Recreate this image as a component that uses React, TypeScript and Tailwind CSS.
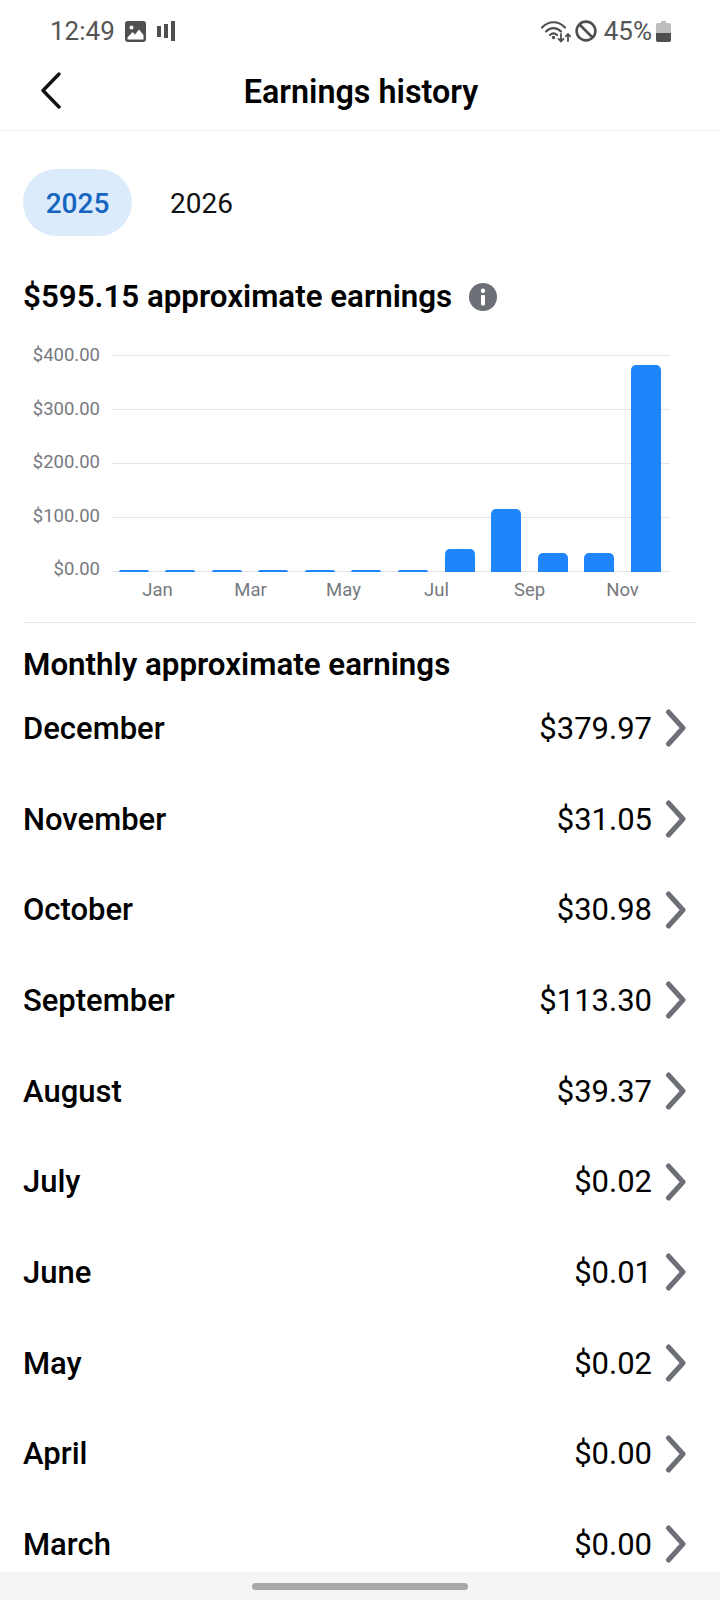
const yLabels = ['$400.00', '$300.00', '$200.00', '$100.00', '$0.00']

// bar heights in px above the $0.00 line
const bars = [2, 2, 2, 2, 2, 2, 2, 23, 63, 19, 19, 207]

const xLabels = ['Jan', 'Mar', 'May', 'Jul', 'Sep', 'Nov']

const months = [
  { name: 'December', amount: '$379.97' },
  { name: 'November', amount: '$31.05' },
  { name: 'October', amount: '$30.98' },
  { name: 'September', amount: '$113.30' },
  { name: 'August', amount: '$39.37' },
  { name: 'July', amount: '$0.02' },
  { name: 'June', amount: '$0.01' },
  { name: 'May', amount: '$0.02' },
  { name: 'April', amount: '$0.00' },
  { name: 'March', amount: '$0.00' },
]

function StatusBar() {
  return (
    <div className="h-[60px] flex items-center justify-between pl-[50px] pr-[49px] pt-[2px] text-[#555555] text-[26px] leading-none">
      <div className="flex items-center">
        <span>12:49</span>
        {/* picture notification */}
        <svg width="21" height="21" viewBox="0 0 21 21" className="ml-[10px]">
          <rect width="21" height="21" rx="3" fill="#4f4f4f" />
          <circle cx="6.5" cy="6.5" r="2" fill="#fff" />
          <path d="M2.5 16.5 L7.5 11 L10 13.5 L14 8.5 L18.5 14 V18.5 H2.5 Z" fill="#fff" />
        </svg>
        {/* signal bars */}
        <svg width="18" height="20" viewBox="0 0 18 20" className="ml-[11px]">
          <rect x="0" y="5" width="4" height="11" fill="#4f4f4f" />
          <rect x="7" y="3" width="4" height="14" fill="#4f4f4f" />
          <rect x="14" y="0" width="4" height="20" fill="#4f4f4f" />
        </svg>
      </div>
      <div className="flex items-center">
        {/* wifi with up/down arrows */}
        <svg width="30" height="23" viewBox="0 0 30 23" fill="none" stroke="#4f4f4f" strokeWidth="2.2" strokeLinecap="round">
          <path d="M1 7.5 C7.5 0.5 17.5 0.5 24 7.5" />
          <path d="M5 11.5 C9.5 7 15.5 7 20 11.5" />
          <path d="M9 15 C11.5 12.8 13.5 12.8 16 15" />
          <circle cx="12.5" cy="17.5" r="0.6" fill="#4f4f4f" />
          <path d="M20 14 V21 M17.5 18.8 L20 21.4 L22.5 18.8" strokeWidth="1.8" />
          <path d="M27 21 V14 M24.8 16.4 L27 14 L29.2 16.4" strokeWidth="1.8" />
        </svg>
        {/* do not disturb */}
        <svg width="22" height="22" viewBox="0 0 22 22" fill="none" stroke="#4f4f4f" strokeWidth="2.6" className="ml-[4px]">
          <circle cx="11" cy="11" r="9.4" />
          <path d="M4.5 4.5 L17.5 17.5" />
        </svg>
        <span className="ml-[7px]">45%</span>
        {/* battery */}
        <svg width="15" height="21" viewBox="0 0 15 21" className="ml-[4px]">
          <path d="M5 0 H10 V2 H13 Q15 2 15 4 V19 Q15 21 13 21 H2 Q0 21 0 19 V4 Q0 2 2 2 H5 Z" fill="#bdbdbd" />
          <path d="M0 12 H15 V19 Q15 21 13 21 H2 Q0 21 0 19 Z" fill="#4f4f4f" />
        </svg>
      </div>
    </div>
  )
}

function Header() {
  return (
    <div className="relative h-[71px] flex items-center justify-center border-b border-[#efefef]">
      <svg width="22" height="38" viewBox="0 0 22 38" fill="none" stroke="#111111" strokeWidth="3.4" strokeLinecap="round" strokeLinejoin="round" className="absolute left-[40px] top-[12px]">
        <path d="M19 2 L3 18.5 L19 35" />
      </svg>
      <h1 className="text-[32.3px] font-semibold text-black pl-[2px] pb-[5px]">Earnings history</h1>
    </div>
  )
}

function Chart() {
  return (
    <div className="mt-[38px] flex">
      {/* y axis labels */}
      <div className="w-[77px] h-[238px] -mt-[12px] flex flex-col justify-between items-end text-[18.5px] leading-[24px] text-[#77797e]">
        {yLabels.map((l) => (
          <span key={l}>{l}</span>
        ))}
      </div>
      <div className="w-[559px] ml-[11px]">
        <div className="relative h-[217px]">
          {/* grid lines */}
          <div className="absolute inset-0 flex flex-col justify-between">
            {yLabels.map((l) => (
              <div key={l} className="h-px bg-[#e3e6ea]" />
            ))}
          </div>
          {/* bars */}
          <div className="absolute left-[7.5px] bottom-0 flex items-end gap-[16.6px]">
            {bars.map((h, i) => (
              <div key={i} className="w-[30px] rounded-t-[5px] bg-[#1e85fb]" style={{ height: h }} />
            ))}
          </div>
        </div>
        <div className="flex mt-[6px] text-[18.5px] leading-[24px] text-[#77797e]">
          {xLabels.map((l) => (
            <span key={l} className="w-[93px] text-center">{l}</span>
          ))}
        </div>
      </div>
    </div>
  )
}

function MonthRow({ name, amount }: { name: string; amount: string }) {
  return (
    <div className="h-[90.67px] flex items-center justify-between shrink-0">
      <span className="text-[31px] font-medium text-black">{name}</span>
      <div className="flex items-center">
        <span className="text-[31px] text-black">{amount}</span>
        <svg width="22" height="38" viewBox="0 0 22 38" fill="none" stroke="#6c6f75" strokeWidth="5" strokeLinecap="round" strokeLinejoin="round" className="ml-[13px] mr-[10px] mb-[2px]">
          <path d="M3.5 3 L18 19 L3.5 35" />
        </svg>
      </div>
    </div>
  )
}

export default function App() {
  return (
    <div className="w-[720px] h-[1600px] bg-white flex flex-col overflow-hidden font-['Roboto',sans-serif]">
      <StatusBar />
      <Header />
      <div className="flex-1 min-h-0 overflow-hidden px-[23px]">
        <div className="pt-[38px] flex items-center text-[28px]">
          <div className="w-[109px] h-[67px] rounded-full bg-[#dcebfb] flex items-center justify-center pt-[2px] font-medium text-[#1565c0]">
            2025
          </div>
          <span className="ml-[38px] pt-[2px] text-[#111111]">2026</span>
        </div>
        <div className="mt-[41px] h-[40px] flex items-center">
          <h2 className="text-[31.3px] font-semibold text-black">$595.15 approximate earnings</h2>
          <svg width="28" height="28" viewBox="0 0 28 28" className="ml-[17px]">
            <circle cx="14" cy="14" r="14" fill="#6c6f75" />
            <circle cx="14" cy="7.8" r="2.2" fill="#fff" />
            <rect x="12" y="12" width="4" height="10.5" rx="1" fill="#fff" />
          </svg>
        </div>
        <Chart />
        <div className="mt-[20px] border-t border-[#e3e6ea] w-[674px]" />
        <h2 className="mt-[22px] h-[40px] leading-[40px] text-[31.3px] font-semibold text-black">Monthly approximate earnings</h2>
        <div className="mt-[-1px] flex flex-col">
          {months.map((m) => (
            <MonthRow key={m.name} name={m.name} amount={m.amount} />
          ))}
        </div>
      </div>
      <div className="h-[28px] shrink-0 bg-[#f5f5f5] flex justify-center pt-[11px]">
        <div className="w-[216px] h-[7px] rounded-full bg-[#a8a8a8]" />
      </div>
    </div>
  )
}
